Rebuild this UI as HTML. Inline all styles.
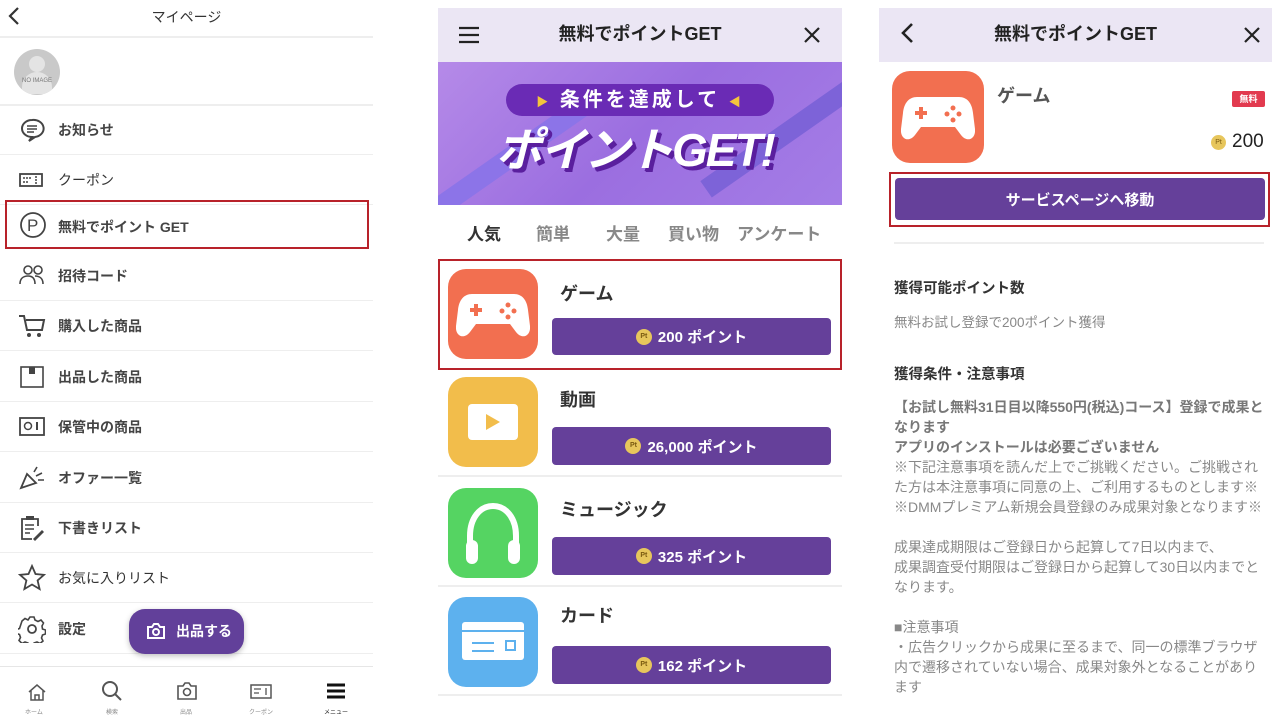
<!DOCTYPE html>
<html><head><meta charset="utf-8"><style>
*{margin:0;padding:0;box-sizing:border-box}
body{width:1280px;height:720px;background:#fff;position:relative;overflow:hidden;font-family:"Liberation Sans","Noto Sans CJK JP",sans-serif;color:#333}
.a{position:absolute}
.row{position:absolute;left:0;width:373px;height:50px;border-bottom:1.5px solid #eee}
.row .t{position:absolute;left:58px;top:50%;transform:translateY(-50%);font-size:14px;color:#444;font-weight:bold}
.row svg{position:absolute;left:18px;top:50%;transform:translateY(-50%)}
.hdr{background:#ebe6f4;height:54px;font-weight:bold;font-size:18px;color:#222;text-align:center;line-height:52px}
.btn{position:absolute;background:#65409a;border-radius:4px;color:#fff;font-weight:bold;font-size:15px;display:flex;align-items:center;justify-content:center}
.coin{display:inline-block;width:16px;height:16px;border-radius:50%;background:#e7c65c;margin-right:6px;font-size:7px;line-height:16px;text-align:center;color:#7a5a10}
.ico{position:absolute;width:90px;height:90px;border-radius:18px}
.nm{position:absolute;font-size:18px;font-weight:bold;color:#333}
.dv{position:absolute;left:438px;width:404px;height:2px;background:#eee}
.txt{position:absolute;left:894px;font-size:14px;color:#888;line-height:20px;width:370px}
</style></head><body>
<!-- LEFT PANEL -->
<svg class="a" style="left:6px;top:6px" width="16" height="20"><path d="M12 2 L4 10 L12 18" stroke="#333" stroke-width="2.2" fill="none"/></svg>
<div class="a" style="left:0;width:373px;top:7px;text-align:center;font-size:14px;color:#333">マイページ</div>
<div class="a" style="left:0;top:36px;width:373px;height:2px;background:#eee"></div>
<div class="a" style="left:14px;top:49px;width:46px;height:46px;border-radius:50%;background:#c9c9c9;overflow:hidden">
<div class="a" style="left:15px;top:7px;width:16px;height:16px;border-radius:50%;background:#e4e4e4"></div>
<div class="a" style="left:8px;top:23px;width:30px;height:22px;border-radius:15px 15px 0 0;background:#e4e4e4"></div>
<div class="a" style="left:2px;top:29px;font-size:6px;color:#777;width:42px;text-align:center">NO IMAGE</div></div>
<div class="a" style="left:0;top:104px;width:373px;height:1.5px;background:#eee"></div>
<div class="row" style="top:105px"><svg width="28" height="28"><path d="M14 4a10 8.5 0 1 0 0 17l-3 4 6-4a10 8.5 0 0 0-3-17z" stroke="#444" stroke-width="2" fill="none"/><path d="M9 10h10M9 13h10M9 16h7" stroke="#444" stroke-width="1.5"/></svg><span class="t">お知らせ</span></div>
<div class="row" style="top:155px"><svg width="28" height="28"><rect x="2" y="8" width="22" height="12" stroke="#444" stroke-width="1.8" fill="none"/><path d="M5 12h8M5 16h6M18 10v8" stroke="#444" stroke-width="1.5" stroke-dasharray="2 1"/></svg><span class="t" style="font-weight:normal;color:#333">クーポン</span></div>
<div class="a" style="left:5px;top:200px;width:364px;height:49px;border:2.5px solid #b8222a"></div>
<svg class="a" style="left:19px;top:211px" width="28" height="28"><circle cx="14" cy="14" r="12" stroke="#444" stroke-width="1.8" fill="none"/><text x="8" y="20" font-size="17" fill="#444" font-family="Liberation Sans">P</text></svg>
<div class="a" style="left:58px;top:217px;font-size:14px;color:#444;font-weight:bold">無料でポイント GET</div>
<div class="row" style="top:251px"><svg width="28" height="28"><circle cx="10" cy="8" r="4" stroke="#444" stroke-width="1.6" fill="none"/><circle cx="20" cy="8" r="4" stroke="#444" stroke-width="1.6" fill="none"/><path d="M2 22c0-6 4-8 8-8s7 2 7 8M17 14c4 0 8 2 8 8" stroke="#444" stroke-width="1.6" fill="none"/></svg><span class="t">招待コード</span></div>
<div class="row" style="top:301px"><svg width="30" height="28"><path d="M1 4h5l3 14h15l2-10H8" stroke="#444" stroke-width="2" fill="none"/><circle cx="11" cy="23" r="2" fill="#444"/><circle cx="21" cy="23" r="2" fill="#444"/></svg><span class="t">購入した商品</span></div>
<div class="row" style="top:352px"><svg width="28" height="28"><rect x="3" y="4" width="22" height="20" stroke="#444" stroke-width="1.6" fill="none"/><rect x="11" y="4" width="6" height="7" fill="#444"/></svg><span class="t">出品した商品</span></div>
<div class="row" style="top:402px"><svg width="28" height="28"><rect x="2" y="5" width="24" height="17" stroke="#444" stroke-width="1.8" fill="none"/><circle cx="10" cy="13" r="3.5" stroke="#444" stroke-width="1.5" fill="none"/><path d="M19 9v8" stroke="#444" stroke-width="2"/></svg><span class="t">保管中の商品</span></div>
<div class="row" style="top:453px"><svg width="28" height="28"><path d="M3 24L9 10l9 9z" stroke="#444" stroke-width="1.8" fill="none"/><path d="M16 8l3-5M18 12l6-3M20 16h6" stroke="#444" stroke-width="1.6"/></svg><span class="t">オファー一覧</span></div>
<div class="row" style="top:503px"><svg width="28" height="28"><path d="M20 12V5H4v20h10" stroke="#444" stroke-width="1.8" fill="none"/><rect x="8" y="2" width="8" height="4" fill="#444"/><path d="M7 11h9M7 15h9M7 19h5" stroke="#444" stroke-width="1.5"/><path d="M15 25l9-9 2 2-9 9z" fill="#444"/></svg><span class="t">下書きリスト</span></div>
<div class="row" style="top:553px"><svg width="28" height="28"><path d="M14 2l3.5 8 8.5.8-6.4 5.6 2 8.6L14 20.5 6.4 25l2-8.6L2 10.8l8.5-.8z" stroke="#444" stroke-width="1.8" fill="none"/></svg><span class="t" style="font-weight:normal;color:#333">お気に入りリスト</span></div>
<div class="row" style="top:604px"><svg width="28" height="28"><circle cx="14" cy="14" r="4" stroke="#444" stroke-width="1.8" fill="none"/><path d="M12 2h4l1 3 3 1.5 3-1.5 2.5 3-1.5 3 .5 3 3 1v4l-3 1-1 3 1.5 3-3 2.5-3-1.5-3 1-1 3h-4l-1-3-3-1-3 1.5-3-3 1.5-3-1-3-3-1v-4l3-1 1-3L4 6l3-2.5L10 5z" stroke="#444" stroke-width="1.6" fill="none"/></svg><span class="t">設定</span></div>
<div class="a" style="left:0;top:666px;width:373px;height:54px;background:#fff;border-top:1px solid #e6e6e6"></div>
<div class="a" style="left:129px;top:609px;width:115px;height:45px;border-radius:16px;background:#62409a;box-shadow:0 2px 6px rgba(0,0,0,.25);color:#fff;font-size:14px;font-weight:bold;line-height:45px;padding-left:47px">出品する</div>
<svg class="a" style="left:146px;top:622px" width="20" height="18"><path d="M2 5h4l2-3h4l2 3h4v11H2z" stroke="#fff" stroke-width="2" fill="none"/><circle cx="10" cy="10" r="3" stroke="#fff" stroke-width="2" fill="none"/></svg>
<svg class="a" style="left:27px;top:682px" width="20" height="20"><path d="M2 10L10 3l8 7M4 8v10h12V8M8 18v-5h4v5" stroke="#555" stroke-width="1.5" fill="none"/></svg>
<svg class="a" style="left:101px;top:680px" width="22" height="22"><circle cx="9" cy="9" r="7" stroke="#555" stroke-width="2" fill="none"/><path d="M14 14l6 6" stroke="#555" stroke-width="2"/></svg>
<svg class="a" style="left:176px;top:681px" width="22" height="20"><path d="M2 5h5l2-3h4l2 3h5v13H2z" stroke="#555" stroke-width="1.6" fill="none"/><circle cx="11" cy="11" r="3.5" stroke="#555" stroke-width="1.6" fill="none"/></svg>
<svg class="a" style="left:250px;top:684px" width="22" height="16"><rect x="1" y="1" width="20" height="13" stroke="#555" stroke-width="1.5" fill="none"/><path d="M4 5h7M4 9h5M16 4v7" stroke="#555" stroke-width="1.3"/></svg>
<svg class="a" style="left:326px;top:682px" width="20" height="18"><path d="M1 3h18M1 9h18M1 15h18" stroke="#111" stroke-width="3"/></svg>
<div class="a" style="top:707px;left:25px;font-size:6px;color:#888">ホーム</div>
<div class="a" style="top:707px;left:106px;font-size:6px;color:#888">検索</div>
<div class="a" style="top:707px;left:180px;font-size:6px;color:#888">出品</div>
<div class="a" style="top:707px;left:249px;font-size:6px;color:#888">クーポン</div>
<div class="a" style="top:707px;left:324px;font-size:6px;color:#222">メニュー</div>

<!-- MIDDLE PANEL -->
<div class="a hdr" style="left:438px;top:8px;width:404px">無料でポイントGET</div>
<svg class="a" style="left:458px;top:26px" width="22" height="18"><path d="M1 2h20M1 9h20M1 16h20" stroke="#222" stroke-width="2.2"/></svg>
<svg class="a" style="left:803px;top:26px" width="18" height="18"><path d="M2 2l14 14M16 2L2 16" stroke="#222" stroke-width="2.2"/></svg>
<div class="a" style="left:438px;top:62px;width:404px;height:143px;background:linear-gradient(135deg,#b58ae8,#9b6ee0 50%,#a47de6);overflow:hidden">
<div class="a" style="left:-20px;top:80px;width:200px;height:20px;background:#8c74e8;transform:rotate(-35deg)"></div>
<div class="a" style="left:250px;top:60px;width:200px;height:20px;background:#7d63d8;transform:rotate(-35deg)"></div>
<div class="a" style="left:68px;top:22px;width:268px;height:32px;border-radius:16px;background:#6a2bb5;color:#fff;font-size:20px;font-weight:bold;text-align:center;line-height:32px;letter-spacing:3px"><span style="color:#f4c43c;font-size:12px">▶</span> 条件を達成して <span style="color:#f4c43c;font-size:12px">◀</span></div>
<div class="a" style="left:58px;top:52px;width:300px;font-size:46px;font-weight:bold;font-style:italic;color:#fff;text-shadow:3px 3px 0 #5a1f9e,4px 4px 0 #5a1f9e;letter-spacing:-2px">ポイントGET!</div>
</div>
<div class="a" style="left:438px;top:220px;width:404px;font-size:17px;font-weight:bold;color:#888">
<span class="a" style="left:29px;color:#333">人気</span><span class="a" style="left:98px">簡単</span><span class="a" style="left:168px">大量</span><span class="a" style="left:230px">買い物</span><span class="a" style="left:299px">アンケート</span></div>
<div class="a" style="left:438px;top:259px;width:404px;height:111px;border:2.5px solid #b8222a"></div>
<div class="ico" style="left:448px;top:269px;background:#f26f50"></div>
<svg class="a" style="left:456px;top:290px" width="74" height="50"><path d="M16 4h42c8 0 13 6 14 16l2 16c1 10-8 14-14 6l-6-8H20l-6 8c-6 8-15 4-14-6l2-16C3 10 8 4 16 4z" fill="#fff"/><path d="M14 20h12M20 14v12" stroke="#f26f50" stroke-width="4"/><circle cx="52" cy="15" r="2.5" fill="#f26f50"/><circle cx="46" cy="21" r="2.5" fill="#f26f50"/><circle cx="58" cy="21" r="2.5" fill="#f26f50"/><circle cx="52" cy="27" r="2.5" fill="#f26f50"/></svg>
<div class="nm" style="left:560px;top:280px">ゲーム</div>
<div class="btn" style="left:552px;top:318px;width:279px;height:37px"><span class="coin">Pt</span>200 ポイント</div>
<div class="ico" style="left:448px;top:377px;background:#f2bd4b"></div>
<div class="a" style="left:468px;top:404px;width:50px;height:36px;background:#fff;border-radius:4px"></div>
<svg class="a" style="left:485px;top:413px" width="16" height="18"><path d="M1 1l14 8-14 8z" fill="#f2bd4b"/></svg>
<div class="nm" style="left:560px;top:386px">動画</div>
<div class="btn" style="left:552px;top:427px;width:279px;height:38px"><span class="coin">Pt</span>26,000 ポイント</div>
<div class="dv" style="top:475px"></div>
<div class="ico" style="left:448px;top:488px;background:#55d462"></div>
<svg class="a" style="left:462px;top:500px" width="62" height="68"><path d="M8 50V36C8 18 18 6 31 6s23 12 23 30v14" stroke="#fff" stroke-width="6" fill="none"/><rect x="4" y="40" width="12" height="24" rx="6" fill="#fff"/><rect x="46" y="40" width="12" height="24" rx="6" fill="#fff"/></svg>
<div class="nm" style="left:560px;top:496px">ミュージック</div>
<div class="btn" style="left:552px;top:537px;width:279px;height:38px"><span class="coin">Pt</span>325 ポイント</div>
<div class="dv" style="top:585px"></div>
<div class="ico" style="left:448px;top:597px;background:#5db1ee"></div>
<div class="a" style="left:462px;top:622px;width:62px;height:38px;background:#fff;border-radius:3px"></div>
<div class="a" style="left:462px;top:630px;width:62px;height:2px;background:#5db1ee"></div>
<div class="a" style="left:472px;top:642px;width:22px;height:2px;background:#5db1ee"></div>
<div class="a" style="left:472px;top:650px;width:22px;height:2px;background:#5db1ee"></div>
<div class="a" style="left:505px;top:640px;width:11px;height:11px;border:2px solid #5db1ee"></div>
<div class="nm" style="left:560px;top:602px">カード</div>
<div class="btn" style="left:552px;top:646px;width:279px;height:38px"><span class="coin">Pt</span>162 ポイント</div>
<div class="dv" style="top:694px"></div>

<!-- RIGHT PANEL -->
<div class="a hdr" style="left:879px;top:8px;width:393px">無料でポイントGET</div>
<svg class="a" style="left:899px;top:22px" width="16" height="22"><path d="M13 2L4 11l9 9" stroke="#222" stroke-width="2.6" fill="none"/></svg>
<svg class="a" style="left:1243px;top:26px" width="18" height="18"><path d="M2 2l14 14M16 2L2 16" stroke="#222" stroke-width="2.2"/></svg>
<div class="ico" style="left:892px;top:71px;width:92px;height:92px;background:#f26f50"></div>
<svg class="a" style="left:901px;top:93px" width="74" height="50"><path d="M16 4h42c8 0 13 6 14 16l2 16c1 10-8 14-14 6l-6-8H20l-6 8c-6 8-15 4-14-6l2-16C3 10 8 4 16 4z" fill="#fff"/><path d="M14 20h12M20 14v12" stroke="#f26f50" stroke-width="4"/><circle cx="52" cy="15" r="2.5" fill="#f26f50"/><circle cx="46" cy="21" r="2.5" fill="#f26f50"/><circle cx="58" cy="21" r="2.5" fill="#f26f50"/><circle cx="52" cy="27" r="2.5" fill="#f26f50"/></svg>
<div class="nm" style="left:997px;top:82px;color:#555">ゲーム</div>
<div class="a" style="left:1232px;top:91px;width:33px;height:16px;background:#e23a4f;border-radius:2px;color:#fff;font-size:9px;font-weight:bold;text-align:center;line-height:16px">無料</div>
<div class="a" style="left:1211px;top:131px;font-size:19px;color:#222;display:flex;align-items:center"><span class="coin" style="width:15px;height:15px;font-size:7px;line-height:15px">Pt</span>200</div>
<div class="a" style="left:889px;top:172px;width:381px;height:55px;border:2.5px solid #b8222a"></div>
<div class="btn" style="left:895px;top:178px;width:370px;height:42px">サービスページへ移動</div>
<div class="a" style="left:894px;top:242px;width:370px;height:1.5px;background:#eee"></div>
<div class="a" style="left:894px;top:277px;font-size:14.5px;font-weight:bold;color:#333">獲得可能ポイント数</div>
<div class="a" style="left:894px;top:311px;font-size:13.5px;color:#888">無料お試し登録で200ポイント獲得</div>
<div class="a" style="left:894px;top:363px;font-size:14.5px;font-weight:bold;color:#333">獲得条件・注意事項</div>
<div class="txt" style="top:397px"><b style="color:#777">【お試し無料31日目以降550円(税込)コース】登録で成果となります<br>アプリのインストールは必要ございません</b><br>※下記注意事項を読んだ上でご挑戦ください。ご挑戦された方は本注意事項に同意の上、ご利用するものとします※<br>※DMMプレミアム新規会員登録のみ成果対象となります※<br><br>成果達成期限はご登録日から起算して7日以内まで、<br>成果調査受付期限はご登録日から起算して30日以内までとなります。<br><br>■注意事項<br>・広告クリックから成果に至るまで、同一の標準ブラウザ内で遷移されていない場合、成果対象外となることがあります</div>
</body></html>
